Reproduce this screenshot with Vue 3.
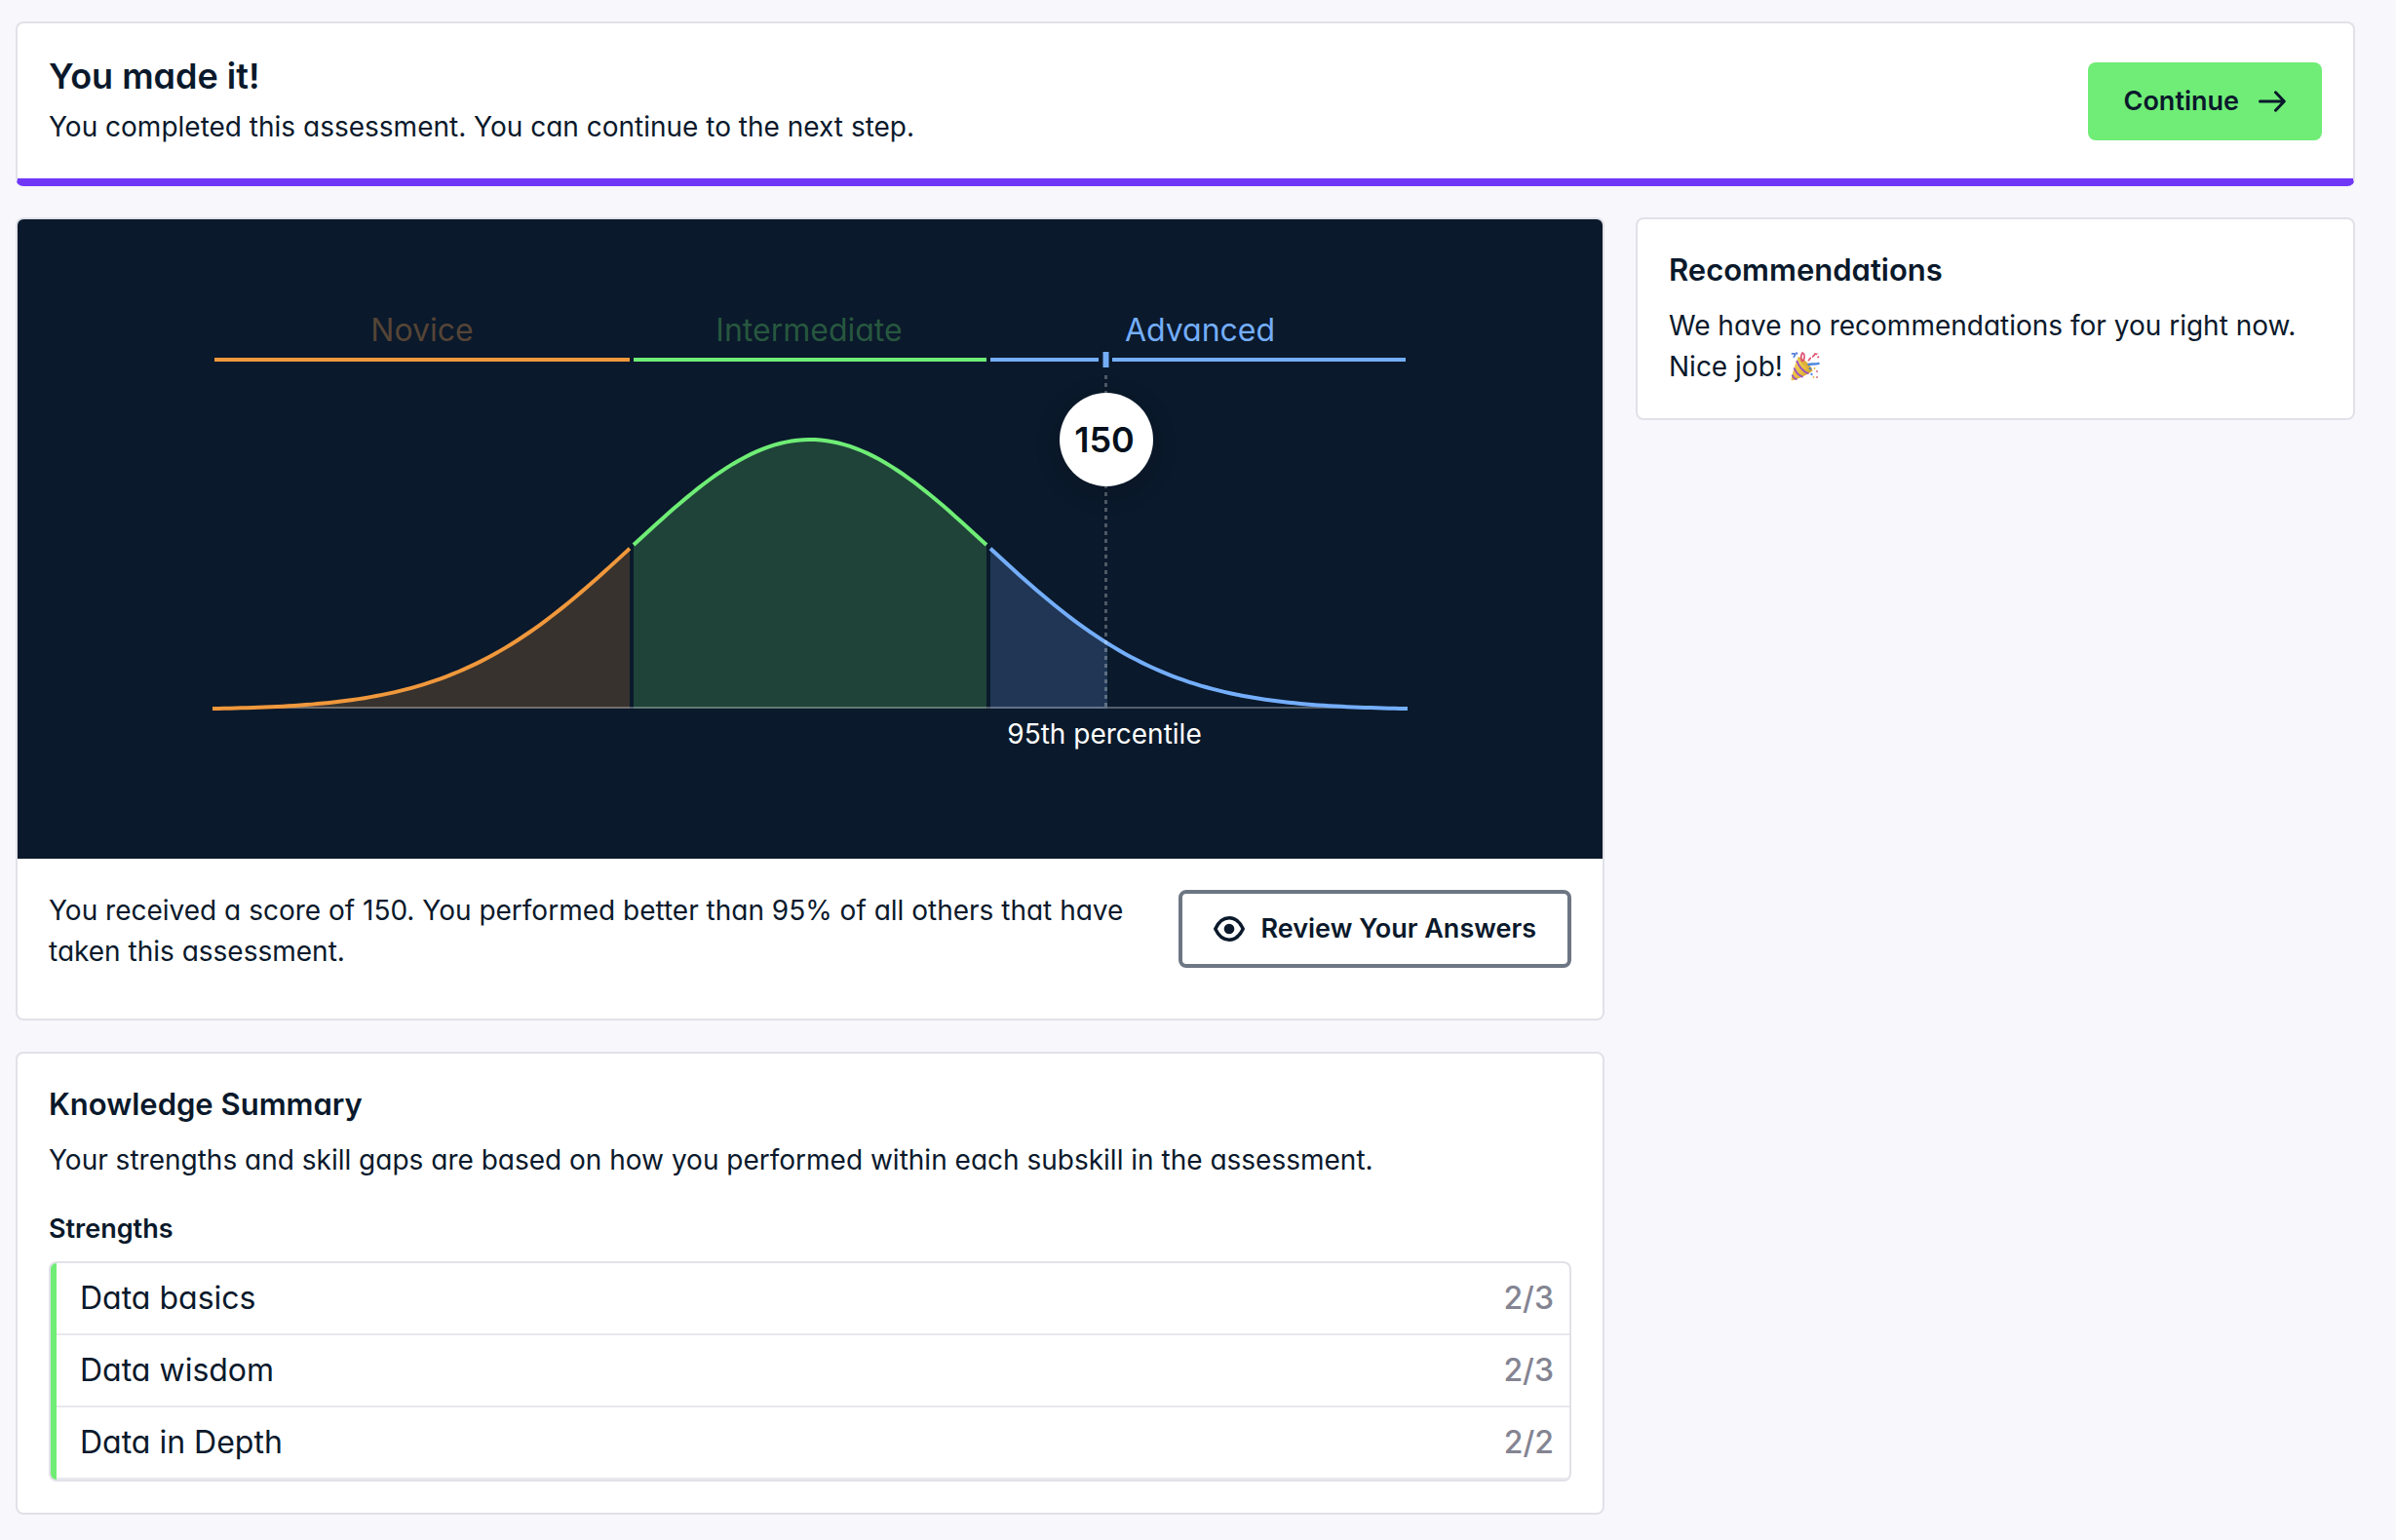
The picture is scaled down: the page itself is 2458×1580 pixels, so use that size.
<script setup>
const strengths = [
  { name: 'Data basics', score: '2/3' },
  { name: 'Data wisdom', score: '2/3' },
  { name: 'Data in Depth', score: '2/2' },
]

// Bell curve, in the chart's own units
const CENTER = 813
const SIGMA = 182
const PEAK = 277
const BASE = 503
const FLOOR = 502

const heightAt = (x) => BASE - PEAK * Math.exp(-((x - CENTER) ** 2) / (2 * SIGMA ** 2))

function curve(from, to) {
  const points = []
  for (let x = from; x < to; x += 6) points.push(`${x} ${heightAt(x).toFixed(2)}`)
  points.push(`${to} ${heightAt(to).toFixed(2)}`)
  return 'M' + points.join('L')
}

const area = (from, to) => `${curve(from, to)}V${FLOOR}H${from}Z`

const levels = [
  { id: 'novice', label: 'Novice', labelX: 415, from: 200, to: 628, fillTo: 628 },
  { id: 'intermediate', label: 'Intermediate', labelX: 812, from: 632, to: 994, fillTo: 994 },
  { id: 'advanced', label: 'Advanced', labelX: 1213, from: 998, to: 1426, fillTo: 1118 },
]
</script>

<template>
  <main class="page">
    <section class="card banner">
      <div class="banner-text">
        <h1>You made it!</h1>
        <p>You completed this assessment. You can continue to the next step.</p>
      </div>
      <button type="button" class="btn primary">
        Continue
        <svg class="arrow" viewBox="0 0 28 22" aria-hidden="true">
          <path d="M1.5 11H26M17.5 1.8L26.3 11L17.5 20.2" />
        </svg>
      </button>
    </section>

    <div class="columns">
      <div class="main-column">
        <section class="card result">
          <svg class="chart" viewBox="0 0 1626 656" role="img" aria-label="Score distribution">
            <g v-for="level in levels" :key="level.id" :class="level.id">
              <path class="area" :d="area(level.from, level.fillTo)" />
            </g>
            <path class="axis" d="M202 501H1424" />
            <g v-for="level in levels" :key="level.id" :class="level.id">
              <path class="line" :d="curve(level.from, level.to)" />
              <text class="level" :x="level.labelX" y="125">{{ level.label }}</text>
            </g>
            <path class="range novice" d="M202 144H628" />
            <path class="range intermediate" d="M632 144H994" />
            <path class="range advanced" d="M998 144H1109M1123 144H1424" />
            <path class="tick" d="M1116.5 136V152" />
            <path class="guide" d="M1116.5 160V500" />
            <circle class="badge" cx="1117" cy="226" r="48" />
            <text class="score" x="1115" y="239">150</text>
            <text class="percentile" x="1115" y="538">95th percentile</text>
          </svg>
          <div class="result-footer">
            <p>
              You received a score of 150. You performed better than 95% of all others that have
              taken this assessment.
            </p>
            <button type="button" class="btn outline">
              <svg class="eye" viewBox="0 0 32 26" aria-hidden="true">
                <path d="M1.8 13C5 6 10 1.8 16 1.8S27 6 30.2 13C27 20 22 24.2 16 24.2S5 20 1.8 13Z" />
                <circle cx="16" cy="13" r="5.3" />
              </svg>
              Review Your Answers
            </button>
          </div>
        </section>

        <section class="card panel">
          <h2>Knowledge Summary</h2>
          <p>Your strengths and skill gaps are based on how you performed within each subskill in the assessment.</p>
          <h3>Strengths</h3>
          <ul class="skills">
            <li v-for="skill in strengths" :key="skill.name">
              <span>{{ skill.name }}</span>
              <span class="skill-score">{{ skill.score }}</span>
            </li>
          </ul>
        </section>
      </div>

      <aside class="card panel">
        <h2>Recommendations</h2>
        <p>
          We have no recommendations for you right now.<br />
          Nice job!
          <svg class="party" viewBox="0 0 30 30" role="img" aria-label="Party popper">
            <defs>
              <linearGradient id="cone" x1="0" y1="0" x2="1" y2="1">
                <stop offset="0" stop-color="#f7dc6a" />
                <stop offset="0.55" stop-color="#e8bd3c" />
                <stop offset="1" stop-color="#b98a2c" />
              </linearGradient>
            </defs>
            <path d="M7.5 5.5C11 5 21 13 22.5 19.5C16 24 8 28 1.8 29.3C.8 29.5.4 29 .6 28C2 21 4.5 12 7.5 5.5Z" fill="url(#cone)" />
            <path d="M6.2 9C8 14.5 13 20.5 18.5 22.3M3.6 16.5C5 20.5 9 24.5 12.5 25.8M1.7 23.5C2.5 26 4.5 28 6.5 28" fill="none" stroke="#9a4fc4" stroke-width="1.9" />
            <path d="M7.5 5.5C11 5 21 13 22.5 19.5C18 18 10 11.5 7.5 5.5Z" fill="#dcae3c" />
            <path d="M12 10C10.5 7 10 3.5 12.3 1C14.5 2 14.5 6 12.8 10" fill="none" stroke="#e0567a" stroke-width="1.9" />
            <path d="M17.5 13.5C20 11.5 24 13.5 29.5 11.6" fill="none" stroke="#4a86e0" stroke-width="2.3" />
            <path d="M1 1.5C2.500 2.8 4 1 4.5 2.5S2.5 4.5 3.500 6M5.5 .5L6.8 2.5" fill="none" stroke="#4f79d8" stroke-width="1.7" />
            <path d="M18.5 9.5C18 7.5 20.5 7.8 20.3 5.7M23 5.5C22 3.8 24.5 4.5 24.5 2.7S27 3.5 27 1.5M27.5 6L29 4.5" fill="none" stroke="#e0506f" stroke-width="1.7" />
            <path d="M19 16.5L21 17.8" stroke="#3f7bdc" stroke-width="2" />
            <circle cx="24.5" cy="17" r="1" fill="#e5b440" />
            <circle cx="27" cy="20" r="1" fill="#e0667f" />
            <circle cx="21.5" cy="23" r="1.2" fill="#5b8ce6" />
            <circle cx="27" cy="26" r="1.1" fill="#d9798c" />
            <circle cx="23.5" cy="26" r=".9" fill="#e5b440" />
          </svg>
        </p>
      </aside>
    </div>
  </main>
</template>

<style>
body {
  margin: 0;
  background: #f7f7fc;
}
</style>

<style scoped>
.page {
  display: flex;
  flex-direction: column;
  gap: 32px;
  padding: 22px 42px 26px 16px;
  color: #0a192b;
  font-family: Inter, 'Liberation Sans', sans-serif;
  font-size: 28px;
  line-height: 42px;
  font-feature-settings: 'cv11';
}

h1,
h2,
h3,
p,
ul {
  margin: 0;
  padding: 0;
}

h1 {
  margin-bottom: 8px;
  font-size: 36px;
  line-height: 45px;
  font-weight: 600;
}

h2 {
  margin-bottom: 16px;
  font-size: 31px;
  line-height: 40px;
  font-weight: 600;
}

h3 {
  margin: 32px 0 16px;
  font-size: 27px;
  line-height: 35px;
  font-weight: 600;
}

.card {
  border: 2px solid #e1e1e9;
  border-radius: 8px;
  background: #fff;
}

.banner {
  display: flex;
  align-items: center;
  justify-content: space-between;
  gap: 32px;
  padding: 32px;
  border-bottom: 8px solid #7037f6;
}

.btn {
  display: flex;
  flex: none;
  align-items: center;
  box-sizing: border-box;
  height: 80px;
  border: 0;
  border-radius: 8px;
  color: inherit;
  font: inherit;
  font-feature-settings: inherit;
  font-size: 27px;
  font-weight: 600;
  white-space: nowrap;
  cursor: pointer;
}

.primary {
  gap: 20px;
  padding: 0 37px;
  background: #6fed76;
}

.outline {
  gap: 16px;
  padding: 0 32px;
  border: 4px solid #6d7683;
  background: #fff;
}

.arrow {
  width: 28px;
  height: 22px;
  fill: none;
  stroke: currentColor;
  stroke-width: 3;
  stroke-linecap: round;
  stroke-linejoin: round;
}

.eye {
  width: 32px;
  height: 26px;
  fill: currentColor;
}

.eye path {
  fill: none;
  stroke: currentColor;
  stroke-width: 3.5;
  stroke-linejoin: round;
}

.columns {
  display: grid;
  grid-template-columns: 1630fr 738fr;
  align-items: start;
  gap: 32px;
}

.main-column {
  display: flex;
  flex-direction: column;
  gap: 32px;
  min-width: 0;
}

.result {
  overflow: hidden;
}

.chart {
  display: block;
  width: 100%;
  background: #0a192b;
}

.chart text {
  text-anchor: middle;
}

.novice {
  --tone: #f0983c;
  --area: #37322e;
  --label: #554436;
}

.intermediate {
  --tone: #6fed76;
  --area: #1f4339;
  --label: #27573f;
}

.advanced {
  --tone: #74aefb;
  --area: #203654;
  --label: #74aefb;
}

.area {
  fill: var(--area);
}

.line,
.range {
  fill: none;
  stroke: var(--tone);
  stroke-width: 4;
}

.level {
  fill: var(--label);
  font-size: 32px;
}

.axis {
  stroke: #fff;
  stroke-opacity: 0.3;
  stroke-width: 2;
}

.tick {
  stroke: #74aefb;
  stroke-width: 6;
}

.guide {
  stroke: #fff;
  stroke-opacity: 0.28;
  stroke-width: 3;
  stroke-dasharray: 4 4;
}

.badge {
  fill: #fff;
  filter: drop-shadow(0 6px 12px rgba(0, 0, 0, 0.15));
}

.score {
  fill: #05101c;
  font-size: 36px;
  font-weight: 600;
}

.percentile {
  fill: #fff;
  font-size: 28px;
}

.result-footer {
  display: flex;
  align-items: flex-start;
  justify-content: space-between;
  gap: 32px;
  padding: 32px 32px 48px;
}

.panel {
  padding: 32px;
}

.skills {
  overflow: hidden;
  padding-left: 6px;
  border: 2px solid #e1e1e9;
  border-radius: 8px;
  background: linear-gradient(to right, #6fed76 6px, #fff 6px);
  list-style: none;
}

.skills li {
  display: flex;
  justify-content: space-between;
  padding: 16px 16px 16px 24px;
  border-bottom: 2px solid #e8e8ee;
  font-size: 32px;
  line-height: 40px;
}

.skill-score {
  color: #848492;
  font-weight: 500;
}

.party {
  width: 30px;
  height: 30px;
  vertical-align: -5px;
}
</style>
